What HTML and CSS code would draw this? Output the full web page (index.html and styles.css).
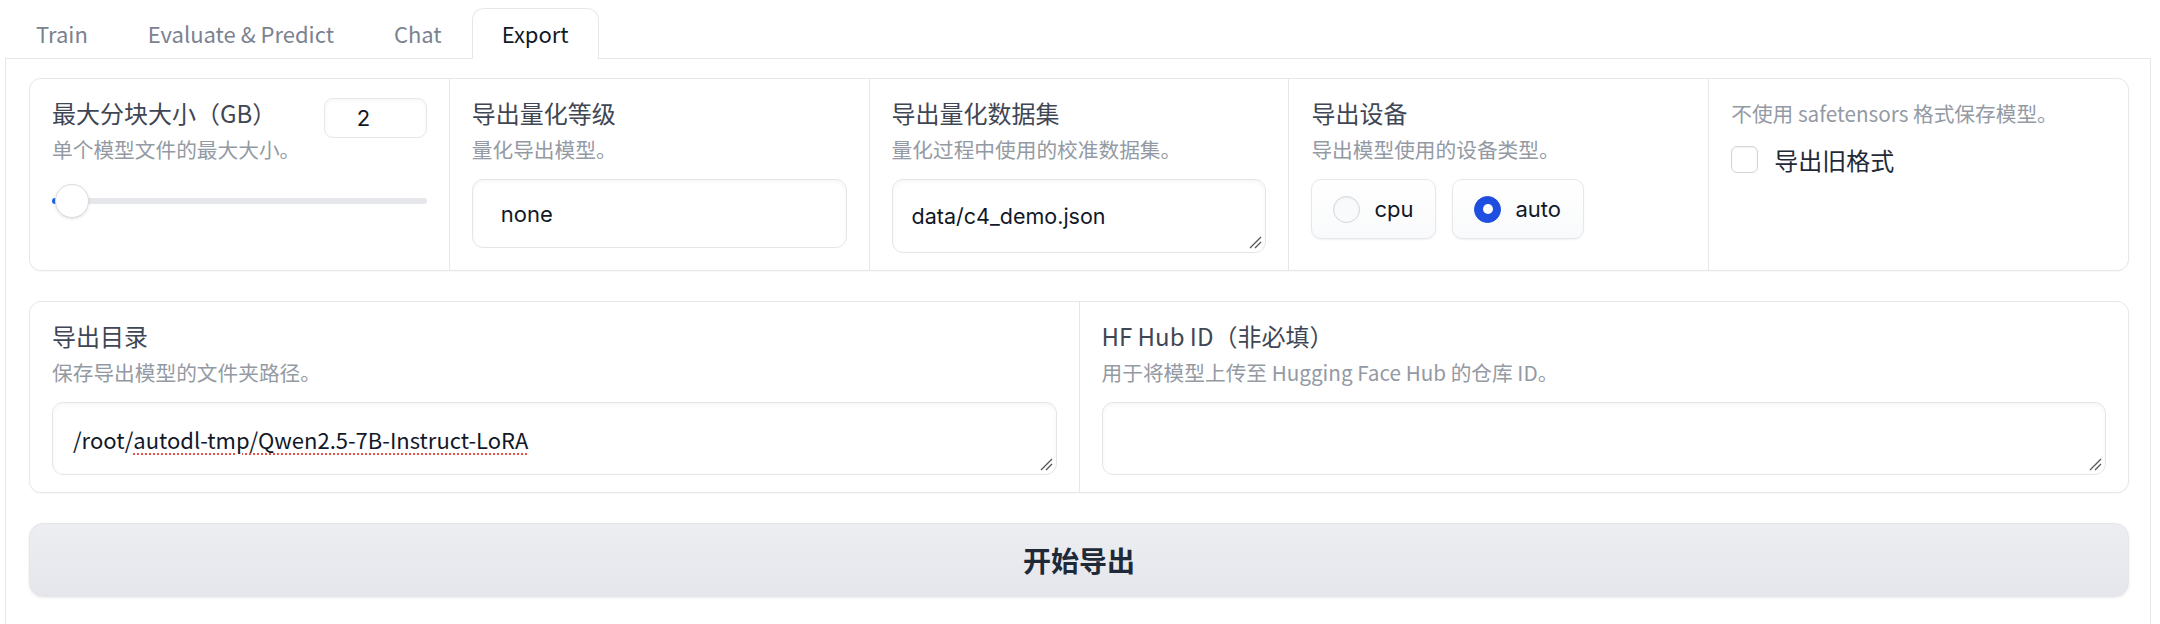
FILE: index.html
```html
<!DOCTYPE html>
<html lang="zh">
<head>
<meta charset="utf-8">
<link rel="stylesheet" href="styles.css">
</head>
<body>
<div class="app">
  <div class="tabs">
    <div class="tab">Train</div>
    <div class="tab">Evaluate &amp; Predict</div>
    <div class="tab">Chat</div>
    <div class="tab active">Export</div>
  </div>
  <div class="panel">
    <div class="form form5">
      <div class="cell">
        <div class="slider-head">
          <div>
            <div class="label">最大分块大小（GB）</div>
            <div class="info">单个模型文件的最大大小。</div>
          </div>
          <div class="num">2</div>
        </div>
        <div class="slider">
          <div class="track"></div>
          <div class="fill"></div>
          <div class="thumb"></div>
        </div>
      </div>
      <div class="cell">
        <div class="label">导出量化等级</div>
        <div class="info">量化导出模型。</div>
        <div class="field dropdown">none</div>
      </div>
      <div class="cell">
        <div class="label">导出量化数据集</div>
        <div class="info">量化过程中使用的校准数据集。</div>
        <div class="field textarea">data/c4_demo.json
          <svg class="grip" width="14" height="14" viewBox="0 0 14 14"><path d="M2 13 L13 2 M7 13 L13 7" stroke="#555" stroke-width="1.3" fill="none"/></svg>
        </div>
      </div>
      <div class="cell">
        <div class="label">导出设备</div>
        <div class="info">导出模型使用的设备类型。</div>
        <div class="radios">
          <div class="radio"><span class="dot"></span>cpu</div>
          <div class="radio"><span class="dot on"><span class="inner"></span></span>auto</div>
        </div>
      </div>
      <div class="cell">
        <div class="info top">不使用 safetensors 格式保存模型。</div>
        <div class="check"><span class="box"></span>导出旧格式</div>
      </div>
    </div>
    <div class="form form2">
      <div class="cell">
        <div class="label">导出目录</div>
        <div class="info">保存导出模型的文件夹路径。</div>
        <div class="field textarea path">/root/<span class="spell">autodl-tmp/Qwen2.5-7B-Instruct-LoRA</span>
          <svg class="grip" width="14" height="14" viewBox="0 0 14 14"><path d="M2 13 L13 2 M7 13 L13 7" stroke="#555" stroke-width="1.3" fill="none"/></svg>
        </div>
      </div>
      <div class="cell">
        <div class="label">HF Hub ID（非必填）</div>
        <div class="info">用于将模型上传至 Hugging Face Hub 的仓库 ID。</div>
        <div class="field textarea path">
          <svg class="grip" width="14" height="14" viewBox="0 0 14 14"><path d="M2 13 L13 2 M7 13 L13 7" stroke="#555" stroke-width="1.3" fill="none"/></svg>
        </div>
      </div>
    </div>
    <div class="primary">开始导出</div>
  </div>
</div>
</body>
</html>
```

FILE: styles.css
```css
* { box-sizing: border-box; }
body {
  margin: 0;
  background: #fff;
  font-family: "Noto Sans CJK SC", "Noto Sans", sans-serif;
}
.app {
  margin-left: 5px;
  width: 2146px;
}
.tabs {
  display: flex;
  height: 58px;
  align-items: flex-end;
  padding-left: 1px;
  position: relative;
  z-index: 1;
}
.tab {
  font-size: 22px;
  color: #7b8290;
  padding: 0 29px;
  height: 51px;
  line-height: 49px;
  margin-bottom: -1px;
  border: 1px solid transparent;
  border-bottom: none;
  border-radius: 12px 12px 0 0;
  white-space: nowrap;
}
.tab.active {
  color: #111827;
  background: #fff;
  border-color: #e5e7eb;
}
.panel {
  border: 1px solid #e5e7eb;
  border-bottom: none;
  padding: 19px 21px 40px 23px;
  display: flex;
  flex-direction: column;
  gap: 30px;
}
.form {
  border: 1px solid #e5e7eb;
  border-radius: 12px;
  overflow: hidden;
  display: grid;
  gap: 1px;
  background: #e5e7eb;
  box-shadow: 0 1px 2px rgba(0,0,0,0.03);
}
.form5 { grid-template-columns: repeat(5, 1fr); }
.form2 { grid-template-columns: 1fr 1fr; }
.cell {
  background: #fff;
  padding: 17px 22px;
  min-width: 0;
}
.label {
  font-size: 24px;
  line-height: 34px;
  color: #3f4654;
  white-space: nowrap;
}
.info {
  font-size: 20.7px;
  line-height: 30px;
  color: #949aa4;
  margin-top: 4px;
  white-space: nowrap;
}
.info.top {
  margin-top: 0;
  padding-top: 2px;
  line-height: 30px;
}
.slider-head {
  display: flex;
  justify-content: space-between;
  align-items: flex-start;
}
.num {
  width: 103px;
  height: 40px;
  margin-top: 2px;
  border: 1px solid #e5e7eb;
  border-radius: 9px;
  font-family: Inter, sans-serif;
  font-size: 22px;
  line-height: 38px;
  padding-left: 32px;
  color: #111827;
  box-shadow: inset 0 2px 4px rgba(0,0,0,0.04);
}
.slider {
  margin-top: 20px;
  height: 34px;
  position: relative;
  display: flex;
  align-items: center;
}
.track {
  flex: 1;
  height: 6px;
  border-radius: 3px;
  background: #e5e7eb;
}
.fill {
  position: absolute;
  left: 0;
  top: 14px;
  width: 20px;
  height: 6px;
  border-radius: 3px;
  background: #2563eb;
}
.thumb {
  position: absolute;
  left: 3px;
  top: 0;
  width: 34px;
  height: 34px;
  border-radius: 50%;
  background: #fff;
  border: 1px solid #d8dbe0;
  box-shadow: 0 1px 3px rgba(0,0,0,0.12);
}
.field {
  margin-top: 15px;
  border: 1px solid #e3e5e9;
  border-radius: 11px;
  background: #fff;
  box-shadow: inset 0 2px 4px rgba(0,0,0,0.04);
  position: relative;
  display: flex;
  align-items: center;
  color: #111827;
  white-space: nowrap;
}
.dropdown {
  height: 69px;
  padding: 0 28px;
  font-family: Inter, sans-serif;
  font-size: 22px;
}
.textarea {
  height: 74px;
  padding: 0 19px;
  font-family: Inter, sans-serif;
  font-size: 21.5px;
}
.textarea.path {
  height: 73px;
  padding: 0 20px;
  font-family: "Noto Sans CJK SC", sans-serif;
  font-size: 22px;
}
.spell {
  text-decoration: underline dotted #e5534b;
  text-decoration-thickness: 2px;
  text-underline-offset: 5px;
}
.grip {
  position: absolute;
  right: 3px;
  bottom: 3px;
}
.radios {
  margin-top: 15px;
  display: flex;
  gap: 16px;
}
.radio {
  height: 60px;
  padding: 0 22px 0 21px;
  display: flex;
  align-items: center;
  gap: 14px;
  border: 1px solid #e5e7eb;
  border-radius: 10px;
  background: linear-gradient(#ffffff, #f9fafb);
  box-shadow: 0 1px 2px rgba(0,0,0,0.06);
  font-family: Inter, sans-serif;
  font-size: 22px;
  color: #111827;
}
.dot {
  width: 27px;
  height: 27px;
  border-radius: 50%;
  border: 1.5px solid #d1d5db;
  background: #f9fafb;
  box-shadow: inset 0 1px 2px rgba(0,0,0,0.05);
  display: flex;
  align-items: center;
  justify-content: center;
}
.dot.on {
  background: #1e4fe0;
  border-color: #1e4fe0;
}
.dot .inner {
  width: 10px;
  height: 10px;
  border-radius: 50%;
  background: #fff;
}
.check {
  margin-top: 14px;
  height: 34px;
  display: flex;
  align-items: center;
  gap: 16px;
  font-size: 24px;
  color: #1f2937;
}
.box {
  width: 27px;
  height: 27px;
  border: 1.5px solid #d1d5db;
  border-radius: 6px;
  background: #fff;
  box-shadow: inset 0 1px 2px rgba(0,0,0,0.05);
}
.primary {
  height: 74px;
  border: 1px solid #e3e5e9;
  border-radius: 14px;
  background: linear-gradient(180deg, #eceef2, #e4e6eb);
  box-shadow: 0 1px 3px rgba(0,0,0,0.08);
  display: flex;
  align-items: center;
  justify-content: center;
  font-size: 28px;
  font-weight: 700;
  color: #1f2937;
}
```
